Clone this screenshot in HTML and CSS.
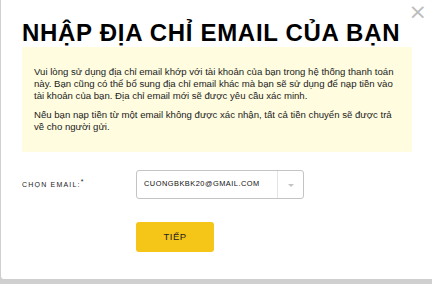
FILE: index.html
```html
<!DOCTYPE html>
<html lang="vi">
<head>
    <meta charset="UTF-8">
    <title>Nhập địa chỉ email</title>
    <link rel="stylesheet" href="styles.css">
</head>
<body>
    <div class="modal">
        <button class="close-btn">&times;</button>
        <h1 class="modal-title">NHẬP ĐỊA CHỈ EMAIL CỦA BẠN</h1>

        <div class="notice">
            <p>Vui lòng sử dụng địa chỉ email khớp với tài khoản của bạn trong hệ thống thanh toán này. Bạn cũng có thể bổ sung địa chỉ email khác mà bạn sẽ sử dụng để nạp tiền vào tài khoản của bạn. Địa chỉ email mới sẽ được yêu cầu xác minh.</p>
            <p>Nếu bạn nạp tiền từ một email không được xác nhận, tất cả tiền chuyển sẽ được trả về cho người gửi.</p>
        </div>

        <div class="form-row">
            <label class="form-label">CHỌN EMAIL:<sup>*</sup></label>
            <div class="select">
                <span class="select-value">CUONGBKBK20@GMAIL.COM</span>
                <span class="select-arrow"></span>
            </div>
        </div>

        <div class="form-actions">
            <button class="next-btn">TIẾP</button>
        </div>
    </div>
</body>
</html>
```

FILE: styles.css
```css
* {
    margin: 0;
    padding: 0;
    box-sizing: border-box;
}

body {
    font-family: "Liberation Sans", Arial, sans-serif;
    background: #cfcfcf;
    width: 432px;
    height: 284px;
    overflow: hidden;
}

.modal {
    position: relative;
    background: #fff;
    margin-left: 1px;
    height: 279px;
    border-bottom-left-radius: 3px;
    padding: 18px 20px 0 21px;
}

.close-btn {
    position: absolute;
    top: 1px;
    right: 5px;
    border: none;
    background: none;
    color: #bdbdbd;
    font-size: 22px;
    font-family: "DejaVu Sans", sans-serif;
    line-height: 22px;
    cursor: pointer;
}

.modal-title {
    font-size: 24px;
    font-weight: bold;
    color: #000;
    letter-spacing: 0.7px;
    line-height: 29px;
    white-space: nowrap;
}

.notice {
    background: #fffcdf;
    border-radius: 2px;
    padding: 19px 12px 19px 12px;
    font-size: 9.6px;
    line-height: 11.8px;
    color: #222;
}

.notice p + p {
    margin-top: 8px;
}

.form-row {
    display: flex;
    align-items: center;
    margin-top: 18px;
}

.form-label {
    width: 114px;
    font-size: 7px;
    letter-spacing: 1.2px;
    color: #222;
}

.form-label sup {
    font-size: 7px;
    vertical-align: 3px;
    line-height: 0;
}

.select {
    display: flex;
    width: 168px;
    height: 29px;
    border: 1px solid #c4c4c4;
    border-radius: 3px;
}

.select-value {
    flex: 1;
    font-size: 7.4px;
    letter-spacing: 0.5px;
    color: #111;
    padding: 8px 0 0 7px;
    border-right: 1px solid #e4e4e4;
}

.select-arrow {
    width: 25px;
    position: relative;
}

.select-arrow::after {
    content: "";
    position: absolute;
    left: 10px;
    top: 13px;
    border-left: 3px solid transparent;
    border-right: 3px solid transparent;
    border-top: 3px solid #c4c4c4;
}

.form-actions {
    padding-left: 114px;
    margin-top: 23px;
}

.next-btn {
    width: 78px;
    height: 30px;
    background: #f5c518;
    border: none;
    border-radius: 3px;
    font-family: "Liberation Sans", Arial, sans-serif;
    font-size: 9.5px;
    letter-spacing: 0.5px;
    color: #222;
    cursor: pointer;
}
```
